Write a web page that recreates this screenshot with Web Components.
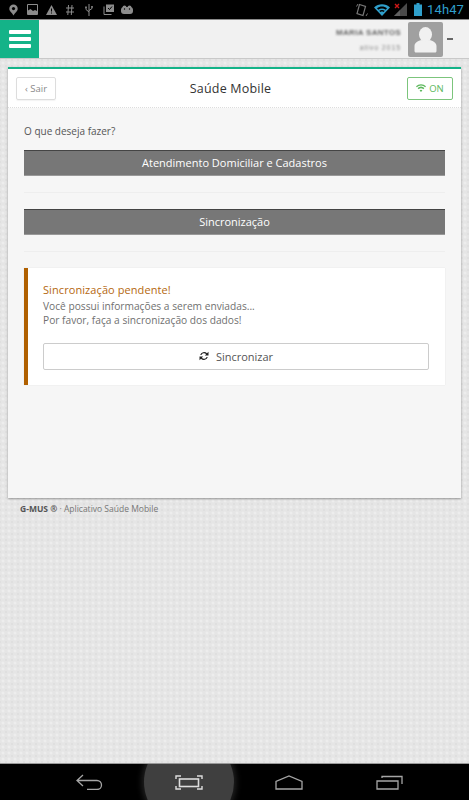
<!DOCTYPE html>
<html lang="pt-BR">
<head>
<meta charset="utf-8">
<title>Saúde Mobile</title>
<style>
  html, body { margin: 0; height: 100%; }
  body {
    width: 469px;
    height: 800px;
    overflow: hidden;
    display: flex;
    flex-direction: column;
    font-family: "Open Sans", sans-serif;
    background-color: #e5e5e5;
    background-image: radial-gradient(circle, #ededed 1.2px, transparent 1.8px), radial-gradient(circle, #dfdfdf 1px, transparent 1.5px);
    background-size: 6px 6px;
    background-position: 0 0, 3px 3px;
  }
  main { flex: 1; display: block; padding: 8px 8px 0; min-height: 0; }
</style>
</head>
<body>
<status-bar></status-bar>
<top-header></top-header>
<main>
  <main-card>
    <span slot="title">Saúde Mobile</span>
    <p class="q" slot="body" style="margin:0;font-size:10px;line-height:14px;color:#555">O que deseja fazer?</p>
    <action-button slot="body" style="margin-top:12px">Atendimento Domiciliar e Cadastros</action-button>
    <divider-line slot="body"></divider-line>
    <action-button slot="body">Sincronização</action-button>
    <divider-line slot="body"></divider-line>
    <pending-alert slot="body"></pending-alert>
  </main-card>
  <page-footer></page-footer>
</main>
<nav-bar></nav-bar>

<script>
class StatusBar extends HTMLElement {
  constructor() {
    super();
    this.attachShadow({ mode: "open" }).innerHTML = `
    <style>
      :host {
        display: flex;
        align-items: center;
        height: 19px;
        flex: none;
        background: #000;
        border-bottom: 1px solid #8a8a8a;
        padding: 0 5px 0 9px;
        font-family: "Roboto", sans-serif;
      }
      .left { display: flex; align-items: center; }
      .left svg { display: block; }
      .right { margin-left: auto; display: flex; align-items: center; }
      .clock { color: #2f9fcb; font-size: 13px; font-weight: 400; margin-left: 5px; letter-spacing: .1px; }
    </style>
    <div class="left">
      <svg width="9" height="12" viewBox="0 0 9 12" style="margin-right:9px"><path d="M4.500 0.500a4.200 4.200 0 0 1 4.200 4.200c0 2.600-2.600 3.600-4.200 6.800C3 8.300.3 7.300.3 4.700A4.200 4.200 0 0 1 4.500.5z" fill="#8c8c8c"/><circle cx="4.500" cy="4.600" r="1.600" fill="#000"/></svg>
      <svg width="11" height="11" viewBox="0 0 11 11" style="margin-right:8px"><path d="M.5.5h10v10H.5z" fill="none" stroke="#8c8c8c"/><path d="M1 9V6.500l2.500-1.500 2.500 2 2-1 2 1V10H1z" fill="#8c8c8c"/></svg>
      <svg width="11" height="10" viewBox="0 0 11 10" style="margin-right:9px"><path d="M5.500 0L11 10H0z" fill="#8c8c8c"/><path d="M5 3.500h1v3H5zM5 7.400h1v1H5z" fill="#000"/></svg>
      <svg width="8" height="10" viewBox="0 0 8 10" style="margin-right:11px"><path d="M2.500 0L1.800 10M6 0L5.300 10M0 3h8M0 7h8" stroke="#8c8c8c" fill="none"/></svg>
      <svg width="8" height="12" viewBox="0 0 8 12" style="margin-right:10px"><path d="M4 0v12M4 8L1 5.500V3.500M4 6.500L7 4.500V3" stroke="#8c8c8c" fill="none"/><rect x=".2" y="2.500" width="1.600" height="1.600" fill="#8c8c8c"/><rect x="6.200" y="2" width="1.600" height="1.600" fill="#8c8c8c"/></svg>
      <svg width="11" height="11" viewBox="0 0 11 11" style="margin-right:7px"><path d="M3 0.500h8v7.500H3z" fill="#8c8c8c"/><path d="M1 2.500v8h7.500" stroke="#8c8c8c" fill="none"/><path d="M5 4l1.500 1.500L9 2.500" stroke="#000" fill="none"/></svg>
      <svg width="12" height="9" viewBox="0 0 12 9"><rect x="0" y="2" width="12" height="7" rx="3" fill="#8c8c8c"/><circle cx="3.500" cy="2.500" r="2" fill="#8c8c8c"/><circle cx="8.500" cy="2.500" r="2" fill="#8c8c8c"/><circle cx="3.500" cy="4" r=".7" fill="#000"/><circle cx="8.500" cy="4" r=".7" fill="#000"/></svg>
    </div>
    <div class="right">
      <svg width="12" height="14" viewBox="0 0 12 14" style="margin-right:6px"><path d="M3.500 1.500l6 2-2.500 9-6-2z" fill="none" stroke="#777" stroke-width="1.200"/><path d="M.5 3.500L2 1M11.500 10.500L10 13" stroke="#777" fill="none"/></svg>
      <svg width="16" height="12" viewBox="0 0 16 12" style="margin-right:4px"><path d="M8 12L0 3.500C4.500-.8 11.500-.8 16 3.500z" fill="#2f9fcb"/><path d="M3 4.300C5.800 2 10.200 2 13 4.300L11.700 5.800C9.500 4.200 6.500 4.200 4.300 5.800z" fill="#000"/><path d="M5.300 6.800c1.600-1 3.800-1 5.400 0L9.600 8C8.600 7.400 7.400 7.400 6.400 8z" fill="#000"/></svg>
      <svg width="13" height="13" viewBox="0 0 13 13" style="margin-right:7px"><path d="M13 0v13H0z" fill="#4a4a4a"/><path d="M6 7v6H0z" fill="#6a6a6a" opacity=".7"/><path d="M1 1l4 4M5 1L1 5" stroke="#d01818" stroke-width="1.400"/></svg>
      <svg width="8" height="13" viewBox="0 0 8 13"><path d="M2.500 0h3v1.500H8V13H0V1.500h2.500z" fill="#2f9fcb"/></svg>
      <span class="clock">14h47</span>
    </div>`;
  }
}

class TopHeader extends HTMLElement {
  constructor() {
    super();
    this.attachShadow({ mode: "open" }).innerHTML = `
    <style>
      :host {
        display: flex;
        flex: none;
        height: 38px;
        background: #f1f1f1;
        border-bottom: 1px solid #c9c9c9;
        box-sizing: content-box;
      }
      .menu {
        width: 39px;
        background: #14b388;
        display: flex;
        flex-direction: column;
        justify-content: center;
        align-items: center;
        gap: 3px;
      }
      .menu i { display: block; width: 22px; height: 4px; background: #fff; border-radius: 1px; }
      .user { margin-left: auto; display: flex; align-items: center; padding-right: 16px; }
      .names { text-align: right; margin-right: 7px; color: #666; filter: blur(.9px); font-family: "Liberation Sans", sans-serif; }
      .names div:first-child { font-size: 8px; line-height: 9px; font-weight: bold; letter-spacing: .3px; margin-bottom: 7px; }
      .names div:last-child { font-size: 7px; line-height: 7px; letter-spacing: .9px; color: #888; }
      .avatar { width: 35px; height: 35px; background: #a0a0a0; border-radius: 2px; display: block; }
      .dash { width: 6px; height: 2px; background: #666; margin-left: 4px; }
    </style>
    <div class="menu"><i></i><i></i><i></i></div>
    <div class="user">
      <div class="names"><div>MARIA SANTOS</div><div>ativo 2015</div></div>
      <svg class="avatar" viewBox="0 0 35 35"><ellipse cx="17.500" cy="12.500" rx="6.500" ry="7.500" fill="#f1f1f1"/><path d="M6.500 29v-5c0-3.500 4-5.500 7-6 2.500 1.500 5.500 1.500 8 0 3 .5 7 2.500 7 6v5c0 .8-.5 1.500-1.500 1.500H8c-1 0-1.500-.7-1.500-1.500z" fill="#f1f1f1"/></svg>
      <div class="dash"></div>
    </div>`;
  }
}

class MainCard extends HTMLElement {
  constructor() {
    super();
    this.attachShadow({ mode: "open" }).innerHTML = `
    <style>
      :host {
        display: block;
        height: 431px;
        box-sizing: border-box;
        background: #f6f6f6;
        border-top: 2px solid #14b388;
        box-shadow: 0 1px 2px rgba(0,0,0,.35);
        color: #444;
      }
      header {
        display: flex;
        align-items: center;
        justify-content: space-between;
        height: 39px;
        box-sizing: border-box;
        padding: 0 8px;
        background: #fff;
        border-bottom: 1px dotted #ddd;
      }
      h1 { margin: 0 2px 0 0; font-size: 12.500px; font-weight: 400; color: #333; letter-spacing: .2px; }
      .tag {
        height: 23px;
        box-sizing: border-box;
        display: flex;
        align-items: center;
        justify-content: center;
        gap: 3px;
        border-radius: 2px;
        font-size: 9.500px;
      }
      .back { width: 40px; border: 1px solid #ddd; color: #888; box-shadow: 0 1px 1px rgba(0,0,0,.05); }
      .on { width: 46px; border: 1px solid #7cc57c; color: #5cb85c; }
      .body { padding: 16px 16px 0; }
    </style>
    <header>
      <div class="tag back"><span>‹ Sair</span></div>
      <h1><slot name="title"></slot></h1>
      <div class="tag on">
        <svg width="10" height="8" viewBox="0 0 10 8"><path d="M5 8L3.600 6.400a2 2 0 0 1 2.800 0zM2.600 5.200L1.600 4.100a5 5 0 0 1 6.800 0L7.400 5.200a3.600 3.600 0 0 0-4.800 0zM.8 3.200L0 2.300a7.400 7.400 0 0 1 10 0l-.8.9a6.200 6.200 0 0 0-8.400 0z" fill="#5cb85c"/></svg>
        <span>ON</span>
      </div>
    </header>
    <div class="body"><slot name="body"></slot></div>`;
  }
}

class ActionButton extends HTMLElement {
  constructor() {
    super();
    this.attachShadow({ mode: "open" }).innerHTML = `
    <style>
      :host {
        display: flex;
        align-items: center;
        justify-content: center;
        height: 26px;
        box-sizing: border-box;
        padding-bottom: 2px;
        background: #777;
        border-top: 1px solid #444;
        border-bottom: 1px solid #999;
        color: #fff;
        font-size: 11px;
      }
    </style>
    <slot></slot>`;
  }
}

class DividerLine extends HTMLElement {
  constructor() {
    super();
    this.attachShadow({ mode: "open" }).innerHTML = `
    <style>
      :host { display: block; height: 1px; background: #eee; margin: 16px 0; }
    </style>`;
  }
}

class PendingAlert extends HTMLElement {
  constructor() {
    super();
    this.attachShadow({ mode: "open" }).innerHTML = `
    <style>
      :host {
        display: block;
        height: 117px;
        box-sizing: border-box;
        background: #fff;
        border-left: 4px solid #b06000;
        padding: 14px 16px 0 15px;
        box-shadow: 0 0 1px rgba(0,0,0,.12);
      }
      h2 { margin: 0 0 2px; font-size: 11px; line-height: 15px; font-weight: 500; color: #b5680f; letter-spacing: .08px; }
      p { margin: 0; font-size: 10.200px; line-height: 14px; color: #707070; }
      .sync {
        margin-top: 16px;
        height: 27px;
        box-sizing: border-box;
        padding-bottom: 1px;
        display: flex;
        align-items: center;
        justify-content: center;
        gap: 7px;
        border: 1px solid #ccc;
        border-radius: 2px;
        color: #555;
        font-size: 11px;
      }
    </style>
    <h2>Sincronização pendente!</h2>
    <p>Você possui informações a serem enviadas...</p>
    <p>Por favor, faça a sincronização dos dados!</p>
    <div class="sync">
      <svg width="10" height="10" viewBox="0 0 10 10"><path d="M1.200 4A4 4 0 0 1 8 2.300L9.500.8v3.700H5.800l1.300-1.300A2.800 2.800 0 0 0 2.400 4zM8.800 6A4 4 0 0 1 2 7.700L.5 9.200V5.500h3.700L2.900 6.800A2.800 2.800 0 0 0 7.600 6z" fill="#222"/></svg>
      <span>Sincronizar</span>
    </div>`;
  }
}

class PageFooter extends HTMLElement {
  constructor() {
    super();
    this.attachShadow({ mode: "open" }).innerHTML = `
    <style>
      :host {
        display: block;
        padding: 5px 0 0 12px;
        font-size: 8.500px;
        line-height: 12px;
        color: #777;
      }
      b { color: #555; font-weight: 700; }
    </style>
    <b>G-MUS ®</b> · Aplicativo Saúde Mobile`;
  }
}

class NavBar extends HTMLElement {
  constructor() {
    super();
    this.attachShadow({ mode: "open" }).innerHTML = `
    <style>
      :host {
        display: block;
        flex: none;
        height: 37px;
        background: #000;
        border-top: 1px solid #999;
        box-sizing: border-box;
        overflow: hidden;
        position: relative;
      }
      .row { display: grid; grid-template-columns: 100px 100px 100px 100px; padding-left: 39px; height: 100%; align-items: center; }
      .row span { display: flex; justify-content: center; }
      .glow {
        position: absolute;
        left: 144px;
        top: -27px;
        width: 90px;
        height: 90px;
        border-radius: 50%;
        background: #3f3f3f;
        box-shadow: 0 0 6px 2px rgba(70,70,70,.5);
      }
      svg { position: relative; display: block; }
    </style>
    <div class="glow"></div>
    <div class="row">
      <span><svg width="27" height="16" viewBox="0 0 27 16"><path d="M7 1L1 6.500 7 12M1 6.500h20a4.500 4.500 0 0 1 0 9H11" fill="none" stroke="#a6a6a6" stroke-width="1.300"/></svg></span>
      <span><svg width="28" height="15" viewBox="0 0 28 15"><rect x="4.500" y="4" width="19" height="7.500" fill="none" stroke="#ddd" stroke-width="1.600"/><path d="M1 4V1h5M22 1h5v3M1 11v3h5M22 14h5v-3" fill="none" stroke="#ddd" stroke-width="1.400"/></svg></span>
      <span><svg width="28" height="15" viewBox="0 0 28 15"><path d="M1 14V6.500L14 1l13 5.500V14z" fill="none" stroke="#a6a6a6" stroke-width="1.300"/></svg></span>
      <span><svg width="27" height="15" viewBox="0 0 27 15"><path d="M1 14V6h21v8z" fill="none" stroke="#a6a6a6" stroke-width="1.300"/><path d="M6 3V1.500h20V9" fill="none" stroke="#a6a6a6" stroke-width="1.300"/></svg></span>
    </div>`;
  }
}

customElements.define("status-bar", StatusBar);
customElements.define("top-header", TopHeader);
customElements.define("main-card", MainCard);
customElements.define("action-button", ActionButton);
customElements.define("divider-line", DividerLine);
customElements.define("pending-alert", PendingAlert);
customElements.define("page-footer", PageFooter);
customElements.define("nav-bar", NavBar);
</script>
</body>
</html>
